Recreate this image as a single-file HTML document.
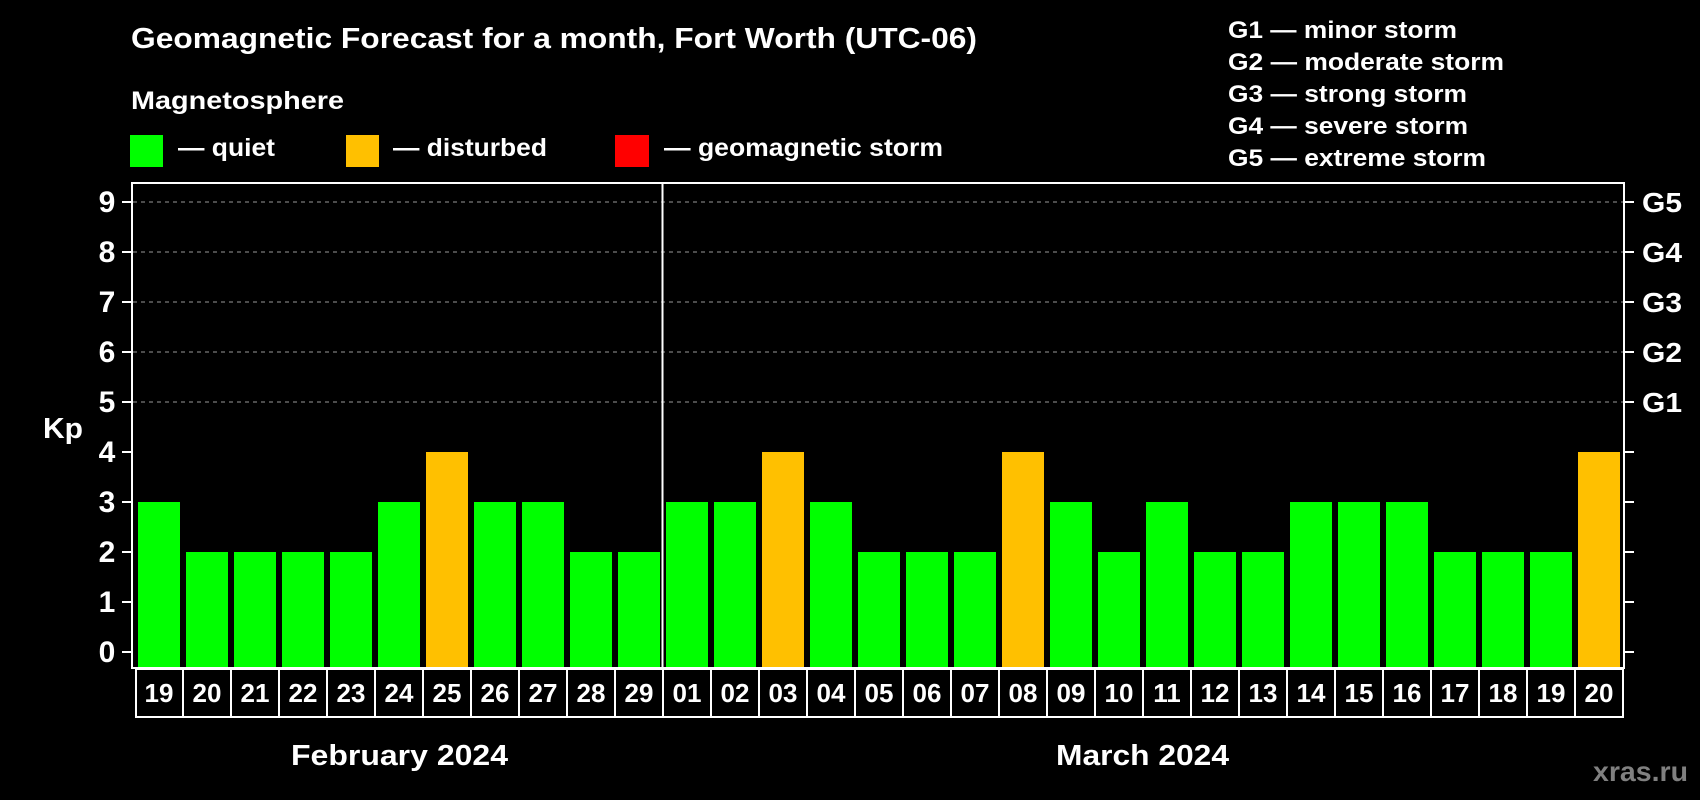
<!DOCTYPE html>
<html><head><meta charset="utf-8"><style>
html,body{margin:0;padding:0;background:#000;width:1700px;height:800px;overflow:hidden}
svg{display:block}
text{font-family:"Liberation Sans",Arial,sans-serif;font-weight:bold;fill:#fff}
</style></head><body>
<svg width="1700" height="800" viewBox="0 0 1700 800" xmlns="http://www.w3.org/2000/svg">
<rect width="1700" height="800" fill="#000"/>
<text x="131" y="48" font-size="29" textLength="846" lengthAdjust="spacingAndGlyphs">Geomagnetic Forecast for a month, Fort Worth (UTC-06)</text>
<text x="131" y="109" font-size="25" textLength="213" lengthAdjust="spacingAndGlyphs">Magnetosphere</text>
<rect x="130" y="135" width="33" height="32" fill="#00ff00"/>
<text x="178" y="156" font-size="25" textLength="97" lengthAdjust="spacingAndGlyphs">— quiet</text>
<rect x="346" y="135" width="33" height="32" fill="#ffc000"/>
<text x="393" y="156" font-size="25" textLength="154" lengthAdjust="spacingAndGlyphs">— disturbed</text>
<rect x="615" y="135" width="34" height="32" fill="#ff0000"/>
<text x="664" y="156" font-size="25" textLength="279" lengthAdjust="spacingAndGlyphs">— geomagnetic storm</text>
<g font-size="24">
<text x="1228" y="38" textLength="229" lengthAdjust="spacingAndGlyphs">G1 — minor storm</text>
<text x="1228" y="70" textLength="276" lengthAdjust="spacingAndGlyphs">G2 — moderate storm</text>
<text x="1228" y="102" textLength="239" lengthAdjust="spacingAndGlyphs">G3 — strong storm</text>
<text x="1228" y="134" textLength="240" lengthAdjust="spacingAndGlyphs">G4 — severe storm</text>
<text x="1228" y="166" textLength="258" lengthAdjust="spacingAndGlyphs">G5 — extreme storm</text>
</g>
<g stroke="#999" stroke-width="1" stroke-dasharray="4 4">
<line x1="133" y1="202" x2="1623" y2="202"/>
<line x1="133" y1="252" x2="1623" y2="252"/>
<line x1="133" y1="302" x2="1623" y2="302"/>
<line x1="133" y1="352" x2="1623" y2="352"/>
<line x1="133" y1="402" x2="1623" y2="402"/>
</g>
<g fill="#00ff00">
<rect x="138" y="502" width="42" height="166"/>
<rect x="186" y="552" width="42" height="116"/>
<rect x="234" y="552" width="42" height="116"/>
<rect x="282" y="552" width="42" height="116"/>
<rect x="330" y="552" width="42" height="116"/>
<rect x="378" y="502" width="42" height="166"/>
<rect x="426" y="452" width="42" height="216" fill="#ffc000"/>
<rect x="474" y="502" width="42" height="166"/>
<rect x="522" y="502" width="42" height="166"/>
<rect x="570" y="552" width="42" height="116"/>
<rect x="618" y="552" width="42" height="116"/>
<rect x="666" y="502" width="42" height="166"/>
<rect x="714" y="502" width="42" height="166"/>
<rect x="762" y="452" width="42" height="216" fill="#ffc000"/>
<rect x="810" y="502" width="42" height="166"/>
<rect x="858" y="552" width="42" height="116"/>
<rect x="906" y="552" width="42" height="116"/>
<rect x="954" y="552" width="42" height="116"/>
<rect x="1002" y="452" width="42" height="216" fill="#ffc000"/>
<rect x="1050" y="502" width="42" height="166"/>
<rect x="1098" y="552" width="42" height="116"/>
<rect x="1146" y="502" width="42" height="166"/>
<rect x="1194" y="552" width="42" height="116"/>
<rect x="1242" y="552" width="42" height="116"/>
<rect x="1290" y="502" width="42" height="166"/>
<rect x="1338" y="502" width="42" height="166"/>
<rect x="1386" y="502" width="42" height="166"/>
<rect x="1434" y="552" width="42" height="116"/>
<rect x="1482" y="552" width="42" height="116"/>
<rect x="1530" y="552" width="42" height="116"/>
<rect x="1578" y="452" width="42" height="216" fill="#ffc000"/>
</g>
<g stroke="#fff" stroke-width="2">
<line x1="122" y1="202" x2="131" y2="202"/><line x1="122" y1="252" x2="131" y2="252"/><line x1="122" y1="302" x2="131" y2="302"/><line x1="122" y1="352" x2="131" y2="352"/><line x1="122" y1="402" x2="131" y2="402"/><line x1="122" y1="452" x2="131" y2="452"/><line x1="122" y1="502" x2="131" y2="502"/><line x1="122" y1="552" x2="131" y2="552"/><line x1="122" y1="602" x2="131" y2="602"/><line x1="122" y1="652" x2="131" y2="652"/>
<line x1="1625" y1="202" x2="1634" y2="202"/><line x1="1625" y1="252" x2="1634" y2="252"/><line x1="1625" y1="302" x2="1634" y2="302"/><line x1="1625" y1="352" x2="1634" y2="352"/><line x1="1625" y1="402" x2="1634" y2="402"/><line x1="1625" y1="452" x2="1634" y2="452"/><line x1="1625" y1="502" x2="1634" y2="502"/><line x1="1625" y1="552" x2="1634" y2="552"/><line x1="1625" y1="602" x2="1634" y2="602"/><line x1="1625" y1="652" x2="1634" y2="652"/>
</g>
<g font-size="30" text-anchor="middle">
<text x="107" y="212">9</text><text x="107" y="262">8</text><text x="107" y="312">7</text><text x="107" y="362">6</text><text x="107" y="412">5</text><text x="107" y="462">4</text><text x="107" y="512">3</text><text x="107" y="562">2</text><text x="107" y="612">1</text><text x="107" y="662">0</text>
</g>
<g font-size="28">
<text x="1642" y="212" textLength="40" lengthAdjust="spacingAndGlyphs">G5</text><text x="1642" y="262" textLength="40" lengthAdjust="spacingAndGlyphs">G4</text><text x="1642" y="312" textLength="40" lengthAdjust="spacingAndGlyphs">G3</text><text x="1642" y="362" textLength="40" lengthAdjust="spacingAndGlyphs">G2</text><text x="1642" y="412" textLength="40" lengthAdjust="spacingAndGlyphs">G1</text>
</g>
<text x="43" y="438" font-size="29" textLength="40" lengthAdjust="spacingAndGlyphs">Kp</text>
<g font-size="26" text-anchor="middle">
<text x="159" y="702">19</text><text x="207" y="702">20</text><text x="255" y="702">21</text><text x="303" y="702">22</text><text x="351" y="702">23</text><text x="399" y="702">24</text><text x="447" y="702">25</text><text x="495" y="702">26</text><text x="543" y="702">27</text><text x="591" y="702">28</text><text x="639" y="702">29</text><text x="687" y="702">01</text><text x="735" y="702">02</text><text x="783" y="702">03</text><text x="831" y="702">04</text><text x="879" y="702">05</text><text x="927" y="702">06</text><text x="975" y="702">07</text><text x="1023" y="702">08</text><text x="1071" y="702">09</text><text x="1119" y="702">10</text><text x="1167" y="702">11</text><text x="1215" y="702">12</text><text x="1263" y="702">13</text><text x="1311" y="702">14</text><text x="1359" y="702">15</text><text x="1407" y="702">16</text><text x="1455" y="702">17</text><text x="1503" y="702">18</text><text x="1551" y="702">19</text><text x="1599" y="702">20</text>
</g>
<text x="291" y="765" font-size="29" textLength="217" lengthAdjust="spacingAndGlyphs">February 2024</text>
<text x="1056" y="765" font-size="29" textLength="173" lengthAdjust="spacingAndGlyphs">March 2024</text>
<text x="1593" y="781" font-size="28" style="fill:#808080" textLength="95" lengthAdjust="spacingAndGlyphs">xras.ru</text>
<rect x="132" y="183" width="1492" height="485" fill="none" stroke="#fff" stroke-width="2"/>
<line x1="662.5" y1="183" x2="662.5" y2="668" stroke="#fff" stroke-width="2"/>
<rect x="136" y="669" width="1487" height="48" fill="none" stroke="#fff" stroke-width="2"/>
<g stroke="#fff" stroke-width="2">
<line x1="183" y1="669" x2="183" y2="717"/><line x1="231" y1="669" x2="231" y2="717"/><line x1="279" y1="669" x2="279" y2="717"/><line x1="327" y1="669" x2="327" y2="717"/><line x1="375" y1="669" x2="375" y2="717"/><line x1="423" y1="669" x2="423" y2="717"/><line x1="471" y1="669" x2="471" y2="717"/><line x1="519" y1="669" x2="519" y2="717"/><line x1="567" y1="669" x2="567" y2="717"/><line x1="615" y1="669" x2="615" y2="717"/><line x1="663" y1="669" x2="663" y2="717"/><line x1="711" y1="669" x2="711" y2="717"/><line x1="759" y1="669" x2="759" y2="717"/><line x1="807" y1="669" x2="807" y2="717"/><line x1="855" y1="669" x2="855" y2="717"/><line x1="903" y1="669" x2="903" y2="717"/><line x1="951" y1="669" x2="951" y2="717"/><line x1="999" y1="669" x2="999" y2="717"/><line x1="1047" y1="669" x2="1047" y2="717"/><line x1="1095" y1="669" x2="1095" y2="717"/><line x1="1143" y1="669" x2="1143" y2="717"/><line x1="1191" y1="669" x2="1191" y2="717"/><line x1="1239" y1="669" x2="1239" y2="717"/><line x1="1287" y1="669" x2="1287" y2="717"/><line x1="1335" y1="669" x2="1335" y2="717"/><line x1="1383" y1="669" x2="1383" y2="717"/><line x1="1431" y1="669" x2="1431" y2="717"/><line x1="1479" y1="669" x2="1479" y2="717"/><line x1="1527" y1="669" x2="1527" y2="717"/><line x1="1575" y1="669" x2="1575" y2="717"/>
</g>
</svg>
</body></html>
